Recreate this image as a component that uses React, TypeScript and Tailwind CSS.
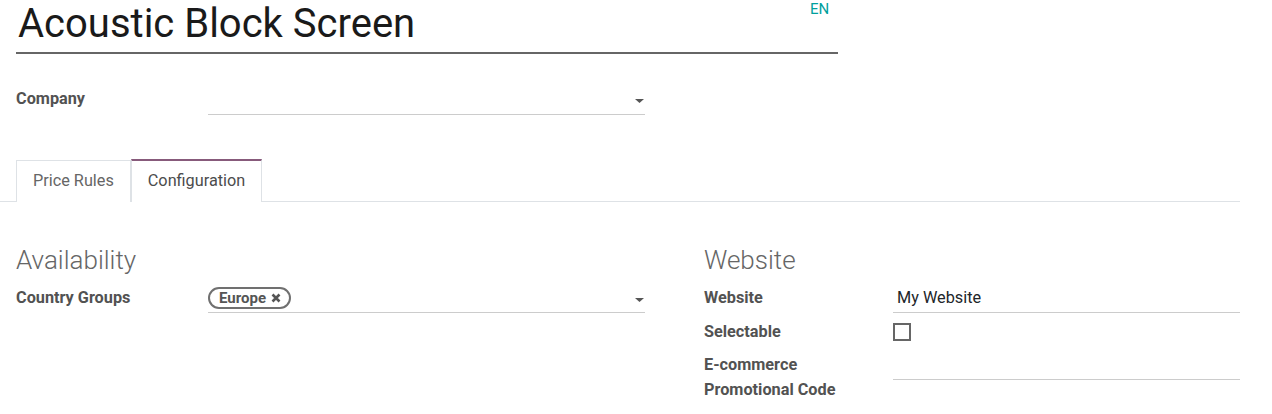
import React from "react";

// Field label in the left column of a group
const Label: React.FC<{ children: React.ReactNode; className?: string }> = ({ children, className = "" }) => (
    <div className={`font-bold text-[16.25px] leading-[24px] text-[#525252] ${className}`}>{children}</div>
);

const Caret: React.FC = () => (
    <svg width="9" height="4" viewBox="0 0 9 4" className="shrink-0">
        <path d="M0 0 L9 0 L4.5 4 Z" fill="#555" />
    </svg>
);

const App: React.FC = () => {
    return (
        <div className="w-[1272px] h-[414px] overflow-hidden bg-white font-['Roboto',sans-serif] text-[16.25px] text-[#4c4c4c]">
            {/* Title */}
            <div className="relative pl-4">
                <span className="absolute left-[810px] top-0 text-[15px] leading-[18px] text-[#00A09D]">EN</span>
                <div className="w-[822px] border-b-2 border-[#666] pl-[2px] pt-[1px] pb-[6px]">
                    <h1 className="text-[40px] leading-[45px] text-[#1a1a1a]">Acoustic Block Screen</h1>
                </div>
            </div>

            {/* Company */}
            <div className="flex items-start pl-4 mt-[33px]">
                <Label className="w-[192px]">Company</Label>
                <div className="w-[437px] h-[28px] flex items-center justify-end pr-[1px] border-b border-[#ccc]">
                    <Caret />
                </div>
            </div>

            {/* Tabs */}
            <div className="mt-[45px] flex w-[1240px] border-b border-[#dee2e6] pl-4">
                <div className="h-[42px] px-4 flex items-center border border-[#dee2e6] border-b-0 -mb-px bg-white text-[#666]">
                    Price Rules
                </div>
                <div className="h-[43px] -mt-px px-4 flex items-center border border-[#dee2e6] border-t-2 border-t-[#875A7B] border-b-0 -mb-px bg-white text-[#4c4c4c]">
                    Configuration
                </div>
            </div>

            {/* Groups */}
            <div className="flex pl-4 pt-[42px]">
                <div className="w-[629px]">
                    <h2 className="text-[26px] leading-[32px] font-light text-[#666] mb-[9px]">Availability</h2>
                    <div className="flex items-start">
                        <Label className="w-[192px] mt-px">Country Groups</Label>
                        <div className="w-[437px] h-[28px] flex items-start justify-between pr-[1px] pt-[2px] border-b border-[#ccc]">
                            <span className="flex items-center gap-[5px] h-[22px] pl-[9px] pr-[8px] rounded-full border-2 border-[#707070] text-[15px] font-bold text-[#555]">
                                Europe
                                <svg width="10" height="10" viewBox="0 0 10 10">
                                    <path d="M1.5 1.5 L8.5 8.5 M8.5 1.5 L1.5 8.5" stroke="#555" strokeWidth="2.6" />
                                </svg>
                            </span>
                            <span className="mt-[11px]">
                                <Caret />
                            </span>
                        </div>
                    </div>
                </div>
                <div className="ml-[59px] w-[536px]">
                    <h2 className="text-[26px] leading-[32px] font-light text-[#666] mb-[9px]">Website</h2>
                    <div className="flex items-start">
                        <Label className="w-[189px] mt-px">Website</Label>
                        <div className="flex-1 h-[28px] flex items-center pl-[4px] border-b border-[#ccc] text-[#212529]">
                            My Website
                        </div>
                    </div>
                    <div className="flex items-center mt-[7px]">
                        <Label className="w-[189px]">Selectable</Label>
                        <div className="w-[18px] h-[18px] border-2 border-[#666]" />
                    </div>
                    <div className="flex items-start mt-[8px]">
                        <Label className="w-[189px] leading-[25px]">
                            E-commerce
                            <br />
                            Promotional Code
                        </Label>
                        <div className="flex-1 h-[28px] border-b border-[#ccc]" />
                    </div>
                </div>
            </div>
        </div>
    );
};

export default App;
